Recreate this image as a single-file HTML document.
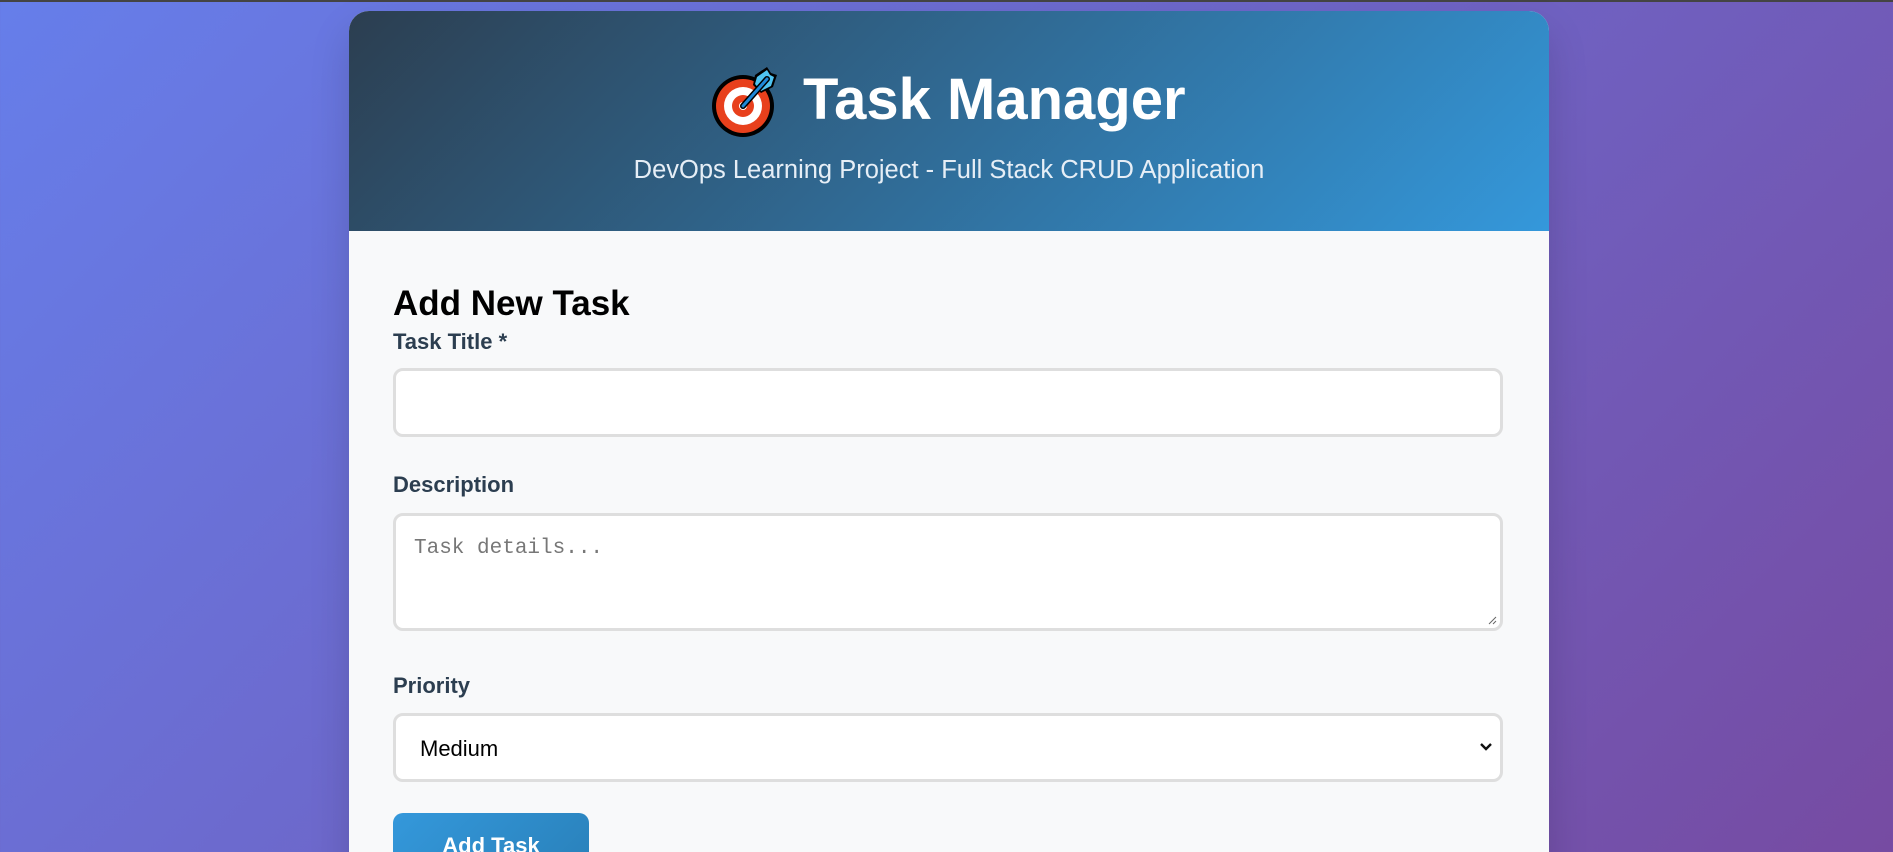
<!DOCTYPE html>
<html><head><meta charset="utf-8"><style>
*{box-sizing:border-box;margin:0;padding:0}
html,body{width:1893px;height:852px;overflow:hidden}
body{background:linear-gradient(135deg,#667eea 0%,#764ba2 100%);font-family:"Liberation Sans",sans-serif;position:relative}
.topline{position:absolute;left:0;top:0;width:100%;height:2px;background:#444}
.card{position:absolute;left:349px;top:11px;width:1200px;height:900px;border-radius:20px;overflow:hidden;background:#f8f9fa;box-shadow:0 20px 40px rgba(0,0,0,.15)}
.hdr{position:absolute;left:0;top:0;width:100%;height:220px;background:linear-gradient(135deg,#2c3e50 0%,#3498db 100%);color:#fff}
.title{position:absolute;left:454px;top:54px;font-size:58px;font-weight:bold;line-height:70px;white-space:nowrap}
.sub{position:absolute;left:0;width:100%;top:144px;text-align:center;font-size:25.5px;color:#e6eef6;line-height:30px}
.icon{position:absolute;left:362px;top:48px;overflow:visible}
.h2{position:absolute;left:44px;top:273px;font-size:35px;font-weight:bold;color:#000;line-height:40px}
.lbl{position:absolute;left:44px;font-size:22px;font-weight:bold;color:#2c3e50;line-height:26px}
.box{position:absolute;left:44px;width:1110px;background:#fff;border:3px solid #dedede;border-radius:10px}
.ph{position:absolute;left:18px;top:21px;font-family:"Liberation Mono",monospace;font-size:21px;color:#777}
.med{position:absolute;left:24px;top:20px;font-size:22px;color:#000}
.btn{position:absolute;left:44px;top:802px;width:196px;height:70px;border-radius:10px;background:linear-gradient(135deg,#3498db,#2980b9);color:#fff;font-weight:bold;font-size:22px;text-align:center;padding-top:20px}
</style></head><body>
<div class="topline"></div>
<div class="card">
 <div class="hdr">
  <svg class="icon" width="72" height="82" viewBox="0 0 72 82">
   <circle cx="32" cy="47" r="31" fill="#000"/>
   <circle cx="32" cy="47" r="27" fill="#e8401c"/>
   <circle cx="32" cy="47" r="19" fill="#fff"/>
   <circle cx="32" cy="47" r="11" fill="#e8401c"/>
   <circle cx="32" cy="47" r="4" fill="#fff"/>
   <path d="M44 16 L56 8 L60 14 L66 16 L62 28 L50 34 L42 26 Z" fill="#000"/>
   <path d="M46 18 L56 11 L59 16 L63 18 L60 27 L50 32 L44 25 Z" fill="#4fc3f0"/>
   <line x1="32" y1="47" x2="56" y2="20" stroke="#000" stroke-width="6" stroke-linecap="round"/>
   <line x1="32" y1="47" x2="56" y2="20" stroke="#1e88d8" stroke-width="3" stroke-linecap="round"/>
  </svg>
  <div class="title">Task Manager</div>
  <div class="sub">DevOps Learning Project - Full Stack CRUD Application</div>
 </div>
 <div class="h2">Add New Task</div>
 <div class="lbl" style="top:318px">Task Title *</div>
 <div class="box" style="top:357px;height:69px"></div>
 <div class="lbl" style="top:461px">Description</div>
 <div class="box" style="top:502px;height:118px"><div class="ph">Task details...</div>
  <svg style="position:absolute;right:3px;bottom:3px" width="10" height="10"><path d="M2 9 L9 2 M6 9 L9 6" stroke="#666" stroke-width="1"/></svg></div>
 <div class="lbl" style="top:662px">Priority</div>
 <div class="box" style="top:702px;height:69px"><div class="med">Medium</div>
  <svg style="position:absolute;right:7px;top:26px" width="14" height="10"><path d="M2 2 L7 7 L12 2" stroke="#111" stroke-width="2.4" fill="none"/></svg></div>
 <div class="btn">Add Task</div>
</div>
</body></html>
